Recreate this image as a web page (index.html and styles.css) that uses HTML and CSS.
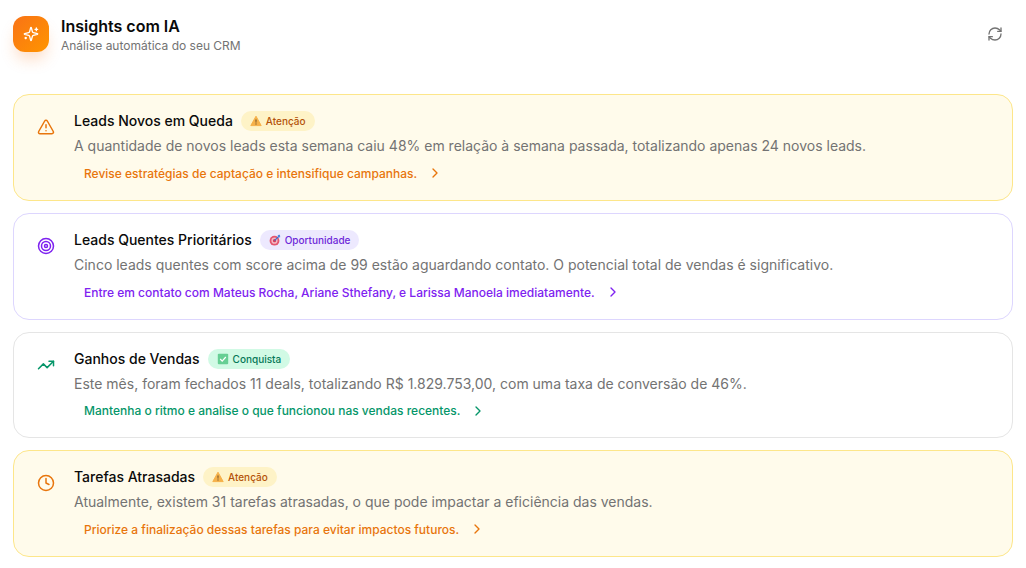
FILE: index.html
```html
<!DOCTYPE html>
<html lang="pt-BR">
<head>
    <meta charset="UTF-8">
    <meta name="viewport" content="width=device-width, initial-scale=1.0">
    <title>Insights com IA</title>
    <link rel="stylesheet" href="styles.css">
</head>
<body>
    <header class="header">
        <div class="header-left">
            <div class="logo">
                <svg class="logo-icon" viewBox="0 0 24 24" fill="none" stroke="currentColor" stroke-width="2" stroke-linecap="round" stroke-linejoin="round">
                    <path d="M9.94 15.5A2 2 0 0 0 8.5 14.06l-6.14-1.58a.5.5 0 0 1 0-.96L8.5 9.94A2 2 0 0 0 9.94 8.5l1.58-6.14a.5.5 0 0 1 .96 0L14.06 8.5A2 2 0 0 0 15.5 9.94l6.14 1.58a.5.5 0 0 1 0 .96L15.5 14.06a2 2 0 0 0-1.44 1.44l-1.58 6.14a.5.5 0 0 1-.96 0z"/>
                    <path d="M20 3v4"/><path d="M22 5h-4"/><path d="M4 17v2"/><path d="M5 18H3"/>
                </svg>
            </div>
            <div>
                <h1 class="header-title">Insights com IA</h1>
                <p class="header-sub">Análise automática do seu CRM</p>
            </div>
        </div>
        <button class="refresh-btn" aria-label="Atualizar">
            <svg class="refresh-icon" viewBox="0 0 24 24" fill="none" stroke="currentColor" stroke-width="2" stroke-linecap="round" stroke-linejoin="round">
                <path d="M3 12a9 9 0 0 1 9-9 9.75 9.75 0 0 1 6.74 2.74L21 8"/><path d="M21 3v5h-5"/>
                <path d="M21 12a9 9 0 0 1-9 9 9.75 9.75 0 0 1-6.74-2.74L3 16"/><path d="M8 16H3v5"/>
            </svg>
        </button>
    </header>

    <main class="list">
        <article class="card card-warning">
            <svg class="card-icon" viewBox="0 0 24 24" fill="none" stroke="currentColor" stroke-width="2" stroke-linecap="round" stroke-linejoin="round">
                <path d="m21.73 18-8-14a2 2 0 0 0-3.48 0l-8 14A2 2 0 0 0 4 21h16a2 2 0 0 0 1.73-3"/><path d="M12 9v4"/><path d="M12 17h.01"/>
            </svg>
            <div class="card-body">
                <div class="card-head">
                    <h2 class="card-title">Leads Novos em Queda</h2>
                    <span class="badge">
                        <svg class="emoji" viewBox="0 0 12 12"><path d="M6 1.2 11.2 10.6H.8z" fill="#f5b14a" stroke="#f5b14a" stroke-linejoin="round"/><path d="M5.5 4.4h1l-.2 3.4h-.6zM5.5 8.4h1v1h-1z" fill="#5a4020"/></svg>
                        Atenção
                    </span>
                </div>
                <p class="card-text">A quantidade de novos leads esta semana caiu 48% em relação à semana passada, totalizando apenas 24 novos leads.</p>
                <a class="card-action">Revise estratégias de captação e intensifique campanhas.
                    <svg class="chevron" viewBox="0 0 24 24" fill="none" stroke="currentColor" stroke-width="2" stroke-linecap="round" stroke-linejoin="round"><path d="m9 18 6-6-6-6"/></svg>
                </a>
            </div>
        </article>

        <article class="card card-chance">
            <svg class="card-icon" viewBox="0 0 24 24" fill="none" stroke="currentColor" stroke-width="2" stroke-linecap="round" stroke-linejoin="round">
                <circle cx="12" cy="12" r="10"/><circle cx="12" cy="12" r="6"/><circle cx="12" cy="12" r="2"/>
            </svg>
            <div class="card-body">
                <div class="card-head">
                    <h2 class="card-title">Leads Quentes Prioritários</h2>
                    <span class="badge">
                        <svg class="emoji" viewBox="0 0 12 12"><circle cx="5.5" cy="6.7" r="4.9" fill="#e4566f"/><circle cx="5.5" cy="6.7" r="3.1" fill="#f2b8c4"/><circle cx="5.5" cy="6.7" r="1.6" fill="#d83a58"/><path d="M5.5 6.7 10 2.2" stroke="#3b6fd0" stroke-width="1.2"/><path d="M8.6 1 11 .8l.2 2.4-1.6.4z" fill="#4f8ae0"/></svg>
                        Oportunidade
                    </span>
                </div>
                <p class="card-text">Cinco leads quentes com score acima de 99 estão aguardando contato. O potencial total de vendas é significativo.</p>
                <a class="card-action">Entre em contato com Mateus Rocha, Ariane Sthefany, e Larissa Manoela imediatamente.
                    <svg class="chevron" viewBox="0 0 24 24" fill="none" stroke="currentColor" stroke-width="2" stroke-linecap="round" stroke-linejoin="round"><path d="m9 18 6-6-6-6"/></svg>
                </a>
            </div>
        </article>

        <article class="card card-win">
            <svg class="card-icon" viewBox="0 0 24 24" fill="none" stroke="currentColor" stroke-width="2" stroke-linecap="round" stroke-linejoin="round">
                <path d="M22 7 13.5 15.5 8.5 10.5 2 17"/><path d="M16 7h6v6"/>
            </svg>
            <div class="card-body">
                <div class="card-head">
                    <h2 class="card-title">Ganhos de Vendas</h2>
                    <span class="badge">
                        <svg class="emoji" viewBox="0 0 12 12"><rect x=".8" y=".8" width="10.4" height="10.4" rx="1" fill="#66cf94"/><path d="M3.2 6 5.2 8.2 8.8 4" fill="none" stroke="#fff" stroke-width="1.2"/></svg>
                        Conquista
                    </span>
                </div>
                <p class="card-text">Este mês, foram fechados 11 deals, totalizando R$ 1.829.753,00, com uma taxa de conversão de 46%.</p>
                <a class="card-action">Mantenha o ritmo e analise o que funcionou nas vendas recentes.
                    <svg class="chevron" viewBox="0 0 24 24" fill="none" stroke="currentColor" stroke-width="2" stroke-linecap="round" stroke-linejoin="round"><path d="m9 18 6-6-6-6"/></svg>
                </a>
            </div>
        </article>

        <article class="card card-warning">
            <svg class="card-icon" viewBox="0 0 24 24" fill="none" stroke="currentColor" stroke-width="2" stroke-linecap="round" stroke-linejoin="round">
                <circle cx="12" cy="12" r="10"/><path d="M12 6v6l4 2"/>
            </svg>
            <div class="card-body">
                <div class="card-head">
                    <h2 class="card-title">Tarefas Atrasadas</h2>
                    <span class="badge">
                        <svg class="emoji" viewBox="0 0 12 12"><path d="M6 1.2 11.2 10.6H.8z" fill="#f5b14a" stroke="#f5b14a" stroke-linejoin="round"/><path d="M5.5 4.4h1l-.2 3.4h-.6zM5.5 8.4h1v1h-1z" fill="#5a4020"/></svg>
                        Atenção
                    </span>
                </div>
                <p class="card-text">Atualmente, existem 31 tarefas atrasadas, o que pode impactar a eficiência das vendas.</p>
                <a class="card-action">Priorize a finalização dessas tarefas para evitar impactos futuros.
                    <svg class="chevron" viewBox="0 0 24 24" fill="none" stroke="currentColor" stroke-width="2" stroke-linecap="round" stroke-linejoin="round"><path d="m9 18 6-6-6-6"/></svg>
                </a>
            </div>
        </article>
    </main>
</body>
</html>
```

FILE: styles.css
```css
* {
    box-sizing: border-box;
}
body {
    margin: 0;
    padding: 16.45px 13px 0;
    background: #fff;
    font-family: 'Inter', sans-serif;
    color: #0a0a0a;
}
.header {
    display: flex;
    justify-content: space-between;
    align-items: flex-start;
    height: 36px;
    margin-bottom: 42px;
}
.header-left {
    display: flex;
    align-items: flex-start;
    gap: 12px;
}
.logo {
    width: 36px;
    height: 36px;
    border-radius: 12px;
    background: linear-gradient(135deg, #f97316, #ff9500);
    box-shadow: 0 10px 15px -3px rgba(249, 115, 22, 0.25);
    display: flex;
    align-items: center;
    justify-content: center;
    color: #fff;
}
.logo-icon {
    width: 16px;
    height: 16px;
}
.header-title {
    margin: 0;
    font-size: 16px;
    line-height: 20px;
    font-weight: 600;
}
.header-sub {
    margin: 0;
    font-size: 12px;
    line-height: 20px;
    color: #737373;
}
.refresh-btn {
    width: 36px;
    height: 36px;
    border: none;
    background: none;
    padding: 0;
    display: flex;
    align-items: center;
    justify-content: center;
    color: #737373;
    cursor: pointer;
}
.refresh-icon {
    width: 16px;
    height: 16px;
}
.list {
    display: flex;
    flex-direction: column;
    gap: 12px;
}
.card {
    display: flex;
    gap: 19px;
    padding: 16px 23px;
    border: 1px solid #e5e5e5;
    border-radius: 16px;
    height: 106.67px;
}
.card-warning {
    background: #fffbeb;
    border-color: #fde68a;
    --accent: #e8750c;
    --badge-bg: #fef3c7;
    --badge-fg: #b45309;
}
.card-chance {
    border-color: #ddd6fe;
    --accent: #7e22f0;
    --badge-bg: #ede9fe;
    --badge-fg: #6d28d9;
}
.card-win {
    --accent: #059669;
    --badge-bg: #d1fae5;
    --badge-fg: #047857;
}
.card-icon {
    flex: none;
    width: 18px;
    height: 18px;
    margin-top: 7px;
    color: var(--accent);
}
.card-head {
    display: flex;
    align-items: center;
    gap: 8px;
    margin-bottom: 5px;
}
.card-title {
    margin: 0;
    font-size: 14px;
    line-height: 20px;
    font-weight: 500;
}
.badge {
    display: inline-flex;
    align-items: center;
    gap: 4px;
    height: 20px;
    padding: 0 9px;
    border-radius: 999px;
    background: var(--badge-bg);
    color: var(--badge-fg);
    font-size: 10px;
    font-weight: 500;
}
.emoji {
    width: 12px;
    height: 12px;
}
.card-text {
    margin: 0 0 3px;
    font-size: 14px;
    line-height: 20px;
    color: #737373;
}
.card-action {
    display: inline-flex;
    align-items: center;
    gap: 10px;
    height: 28px;
    padding: 0 10px;
    font-size: 12px;
    font-weight: 500;
    color: var(--accent);
}
.chevron {
    width: 16px;
    height: 16px;
}
```
